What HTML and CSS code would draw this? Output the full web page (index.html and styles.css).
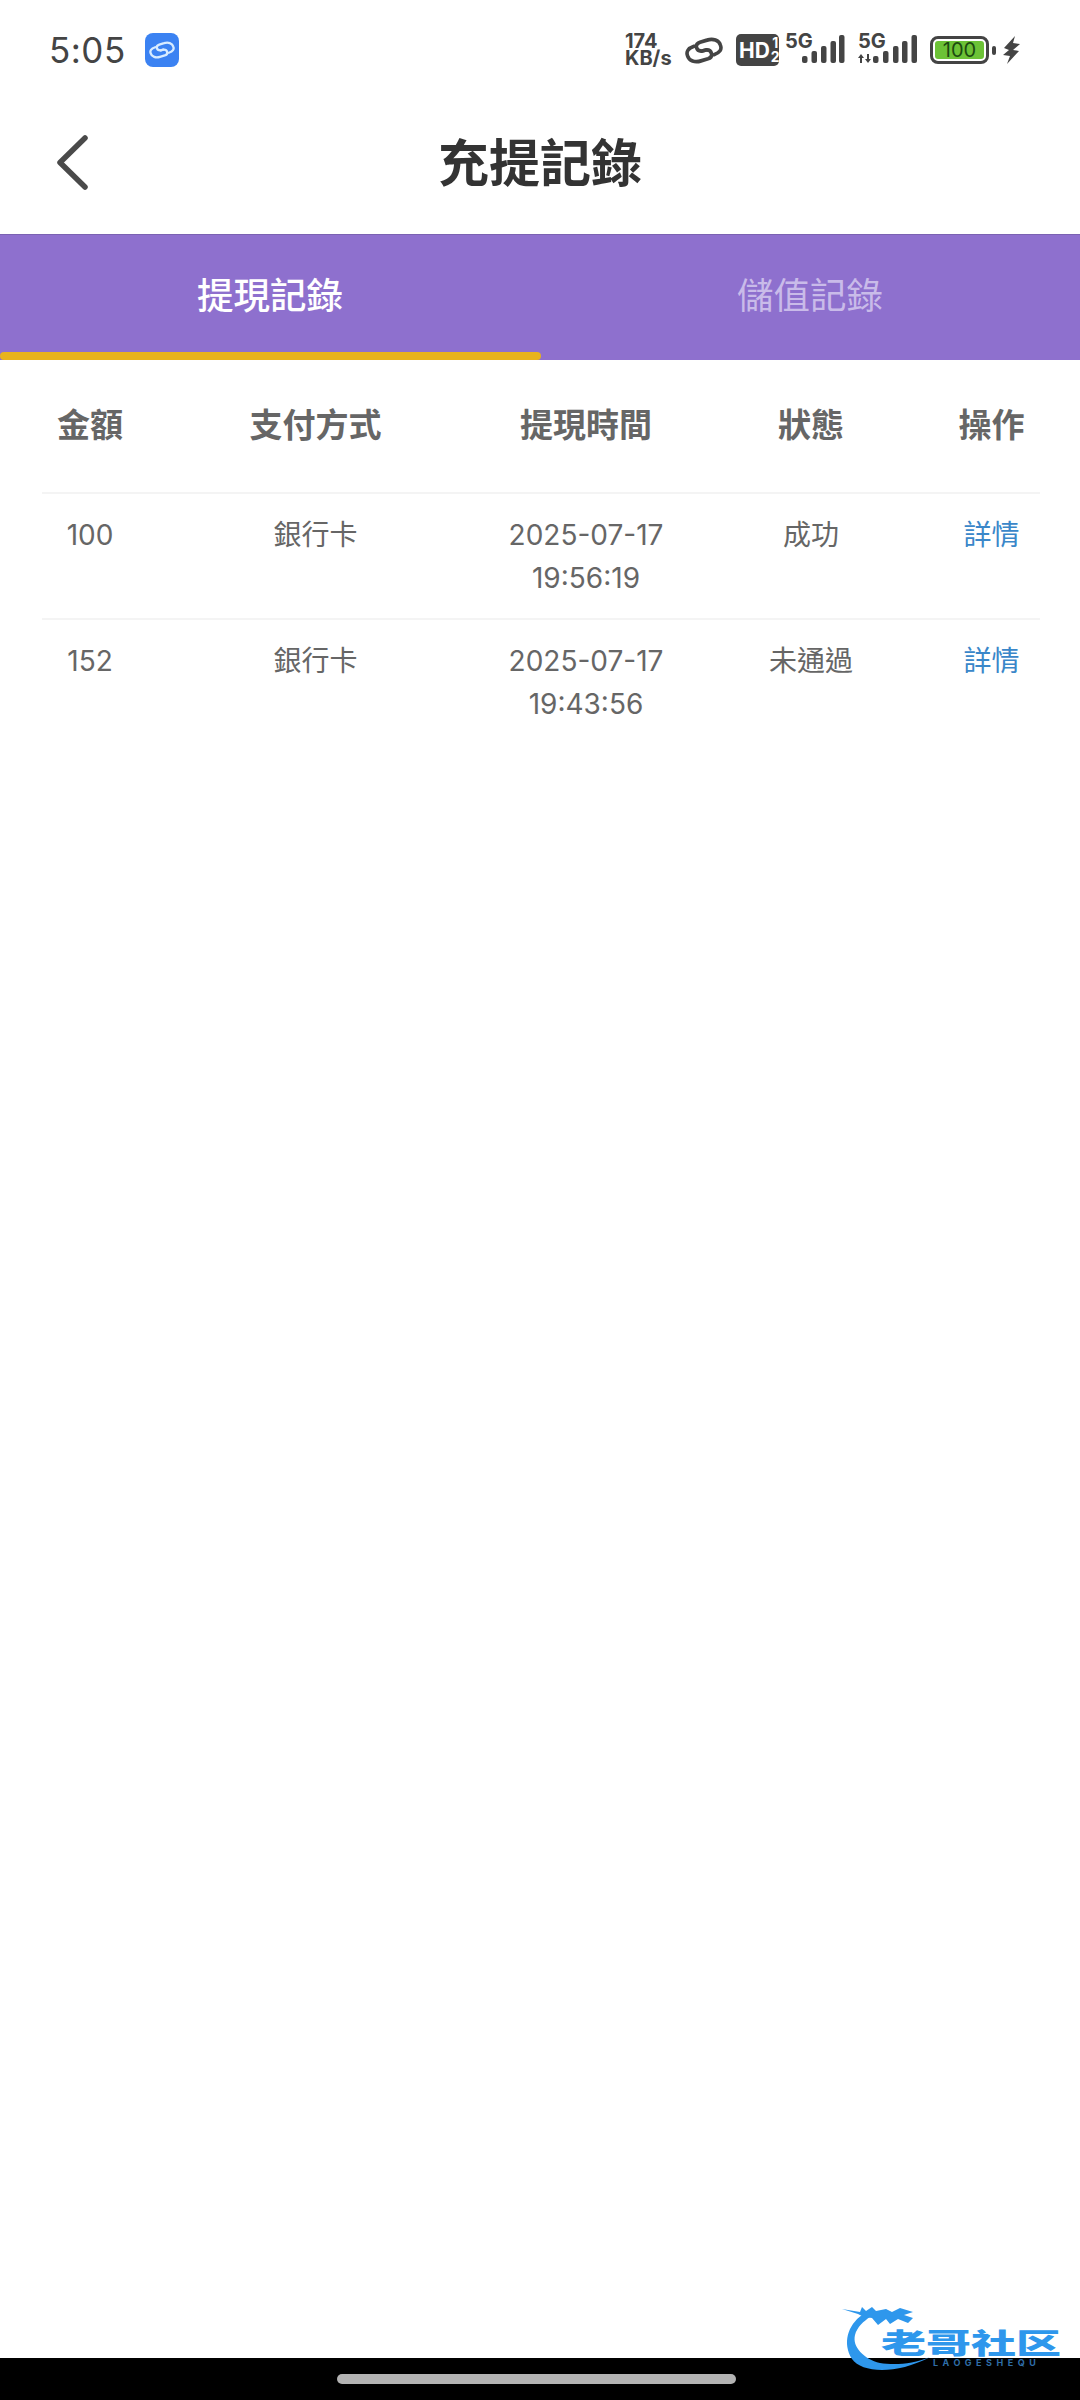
FILE: index.html
```html
<!DOCTYPE html>
<html lang="zh-Hant">
<head>
    <meta charset="UTF-8">
    <meta name="viewport" content="width=device-width, initial-scale=1.0">
    <title>充提記錄</title>
    <link rel="stylesheet" href="styles.css">
</head>
<body>
    <div class="phone">
        <div class="status-bar">
            <div class="status-left">
                <span class="clock">5:05</span>
                <span class="app-badge">
                    <svg width="26" height="18" viewBox="0 0 38 26" fill="none" stroke="#d8ecff" stroke-width="3.4" stroke-linecap="round">
                        <path d="M9 9C3 11 1 14 2.500 18C4 23 10 25 16 23L23 21C29 19 27 12 21 12.500L17 13.500"/>
                        <path d="M29 17C35 15 37 12 35.500 8C34 3 28 1 22 3L15 5C9 7 11 14 17 13.500L21 12.500"/>
                    </svg>
                </span>
            </div>
            <div class="status-right">
                <span class="speed">174<br>KB/s</span>
                <svg class="link-icon" width="38" height="27" viewBox="0 0 38 26" fill="none" stroke="#444" stroke-width="3.6" stroke-linecap="round" preserveAspectRatio="none">
                    <path d="M9 9C3 11 1 14 2.500 18C4 23 10 25 16 23L23 21C29 19 27 12 21 12.500L17 13.500"/>
                    <path d="M29 17C35 15 37 12 35.500 8C34 3 28 1 22 3L15 5C9 7 11 14 17 13.500L21 12.500"/>
                </svg>
                <span class="hd-badge"><b>HD</b><span class="hd-frac">1<br>2</span></span>
                <svg class="signal" width="60" height="36" viewBox="0 -4 60 36" fill="#444">
                    <text x="0" y="14" class="signal-text">5G</text>
                    <rect x="17" y="22" width="5.500" height="7" rx="2"/>
                    <rect x="26.500" y="17" width="5.500" height="12" rx="2"/>
                    <rect x="36" y="12" width="5.500" height="17" rx="2"/>
                    <rect x="45.500" y="7" width="5.500" height="22" rx="2"/>
                    <rect x="54" y="1" width="5.500" height="28" rx="2"/>
                </svg>
                <svg class="signal signal-b" width="60" height="36" viewBox="0 -4 60 36" fill="#444">
                    <text x="0" y="14" class="signal-text">5G</text>
                    <path d="M0 24L3 20L6 24H4V29H2V24Z"/>
                    <path d="M7 25H9V20H11V25H13L10 29Z"/>
                    <rect x="15" y="22" width="5.500" height="7" rx="2"/>
                    <rect x="25" y="17" width="5.500" height="12" rx="2"/>
                    <rect x="35" y="12" width="5.500" height="17" rx="2"/>
                    <rect x="44" y="7" width="5.500" height="22" rx="2"/>
                    <rect x="53.500" y="1" width="5.500" height="28" rx="2"/>
                </svg>
                <span class="battery"><span class="battery-fill">100</span></span>
                <span class="battery-nub"></span>
                <svg class="bolt" width="17" height="28" viewBox="0 0 17 28" fill="#444">
                    <path d="M12 0L1 12l5 2-6 5 7 1-3 8 12-13-6-1 7-6-7-1z"/>
                </svg>
            </div>
        </div>

        <div class="nav-bar">
            <svg class="back" width="33" height="55" viewBox="0 0 33 55" fill="none" stroke="#4a4a4a" stroke-width="5.5" stroke-linecap="round" stroke-linejoin="round">
                <path d="M29 3L4 27.500L29 52"/>
            </svg>
            <h1 class="nav-title">充提記錄</h1>
        </div>

        <div class="tabs">
            <div class="tab tab-active">提現記錄</div>
            <div class="tab">儲值記錄</div>
        </div>

        <table class="records">
            <colgroup>
                <col class="col-amount">
                <col class="col-method">
                <col class="col-time">
                <col class="col-state">
                <col class="col-action">
            </colgroup>
            <thead>
                <tr>
                    <th>金額</th>
                    <th>支付方式</th>
                    <th>提現時間</th>
                    <th>狀態</th>
                    <th>操作</th>
                </tr>
            </thead>
            <tbody>
                <tr>
                    <td>100</td>
                    <td>銀行卡</td>
                    <td>2025-07-17<br>19:56:19</td>
                    <td>成功</td>
                    <td class="detail">詳情</td>
                </tr>
                <tr>
                    <td>152</td>
                    <td>銀行卡</td>
                    <td>2025-07-17<br>19:43:56</td>
                    <td>未通過</td>
                    <td class="detail">詳情</td>
                </tr>
            </tbody>
        </table>

        <div class="spacer"></div>

        <div class="home-bar"><span class="home-pill"></span></div>

        <!-- watermark sits over the page and the nav bar -->
        <div class="watermark">
            <svg width="225" height="72" viewBox="0 0 225 72" fill="#2e97ec">
                <path d="M20 12C6 22 0 40 10 56C20 70 54 72 88 54C70 62 50 62 38 60C22 56 10 44 13 32C15 24 22 18 28 14Z"/>
                <path d="M0 6L18 9L20 4L24 8L30 4L34 8L44 6L50 9L58 5L71 9L62 12L71 15L66 20L56 16L48 21L44 16L36 22L30 15L22 14L16 11Z"/>
            </svg>
            <span class="wm-name">老哥社区</span>
            <span class="wm-latin">LAOGESHEQU</span>
        </div>
    </div>
</body>
</html>
```

FILE: styles.css
```css
* {
    box-sizing: border-box;
}
html, body {
    margin: 0;
    padding: 0;
    background: #fff;
}
body {
    font-family: Inter, "Noto Sans CJK TC", sans-serif;
}
.phone {
    position: relative;
    width: 1080px;
    height: 2400px;
    display: flex;
    flex-direction: column;
    overflow: hidden;
}

/* status bar */
.status-bar {
    height: 92px;
    padding: 8px 60px 0 49px;
    display: flex;
    justify-content: space-between;
    align-items: center;
    color: #444;
}
.status-left {
    display: flex;
    align-items: center;
    gap: 19px;
}
.clock {
    font-size: 35px;
    letter-spacing: 0.5px;
    color: #444;
}
.app-badge {
    width: 34px;
    height: 34px;
    border-radius: 8px;
    background: #3b82f2;
    display: flex;
    align-items: center;
    justify-content: center;
}
.status-right {
    display: flex;
    align-items: center;
}
.speed {
    width: 50px;
    font-size: 20px;
    line-height: 17px;
    font-weight: 700;
    white-space: nowrap;
}
.link-icon {
    margin-left: 10px;
}
.hd-badge {
    margin-left: 13px;
    width: 43px;
    height: 32px;
    border-radius: 5px;
    background: #444;
    color: #fff;
    display: flex;
    align-items: center;
    padding-left: 3px;
    font-size: 21px;
    overflow: hidden;
}
.hd-frac {
    font-size: 14px;
    line-height: 14px;
    font-weight: 700;
    margin-left: 1px;
    text-align: center;
}
.signal {
    margin-left: 6px;
    margin-top: -4px;
}
.signal-b {
    margin-left: 13px;
}
.signal-text {
    font-size: 20px;
    font-weight: 700;
}
.battery {
    margin-left: 12px;
    width: 59px;
    height: 28px;
    border: 3px solid #444;
    border-radius: 8px;
    padding: 2px;
    display: flex;
}
.battery-fill {
    flex: 1;
    background: #6cc236;
    border-radius: 3px;
    color: #1c4a10;
    font-size: 20px;
    line-height: 18px;
    text-align: center;
}
.battery-nub {
    margin-left: 3px;
    width: 4px;
    height: 9px;
    border-radius: 2px;
    background: #444;
}
.bolt {
    margin-left: 7px;
}

/* title row */
.nav-bar {
    position: relative;
    height: 142px;
    padding-bottom: 6px;
    display: flex;
    align-items: center;
    justify-content: center;
}
.back {
    position: absolute;
    left: 56px;
    top: 43px;
}
.nav-title {
    margin: 0;
    font-size: 51px;
    font-weight: 700;
    color: #333;
}

/* tabs */
.tabs {
    height: 126px;
    display: flex;
    background: #8e70ce;
    border-top: 1px solid #7b62b2;
}
.tab {
    flex: 1;
    display: flex;
    align-items: center;
    justify-content: center;
    font-size: 36.500px;
    color: #c9bbe9;
    border-bottom: 8px solid transparent;
}
.tab-active {
    position: relative;
    color: #fff;
    font-weight: 500;
}
.tab-active::after {
    content: "";
    position: absolute;
    left: 0;
    right: -1px;
    bottom: -8px;
    height: 8px;
    border-radius: 4px;
    background: #e8b31c;
}

/* table */
.records {
    width: 998px;
    margin-left: 42px;
    border-collapse: collapse;
    table-layout: fixed;
}
.col-amount { width: 96px; }
.col-method { width: 355px; }
.col-time { width: 186px; }
.col-state { width: 264px; }
.col-action { width: 97px; }
.records th {
    height: 133px;
    padding: 0 0 6px;
    font-size: 33px;
    font-weight: 700;
    color: #666;
    text-align: center;
    white-space: nowrap;
}
.records td {
    height: 126px;
    padding: 20px 0 0;
    font-size: 28px;
    line-height: 43px;
    color: #666;
    text-align: center;
    vertical-align: top;
    white-space: nowrap;
    border-top: 2px solid #f4f4f4;
}
.records td.detail {
    color: #3a87c9;
}

.spacer {
    flex: 1;
}

/* bottom */
.home-bar {
    height: 42px;
    background: #000;
    display: flex;
    justify-content: center;
    padding: 16px 7px 0 0;
}
.home-pill {
    width: 399px;
    height: 10px;
    border-radius: 5px;
    background: #b3b3b3;
}
.watermark {
    position: absolute;
    left: 842px;
    top: 2303px;
    width: 225px;
    height: 72px;
}
.watermark svg {
    display: block;
}
.wm-name {
    position: absolute;
    left: 39px;
    top: 16px;
    font-family: "Noto Sans CJK SC", sans-serif;
    font-size: 45px;
    line-height: 45px;
    font-weight: 900;
    color: #2e97ec;
    white-space: nowrap;
    transform: scaleY(0.62);
}
.wm-latin {
    position: absolute;
    left: 91px;
    top: 54px;
    font-size: 9px;
    line-height: 12px;
    font-weight: 700;
    letter-spacing: 4.5px;
    color: #2f6ea8;
    white-space: nowrap;
}
```
